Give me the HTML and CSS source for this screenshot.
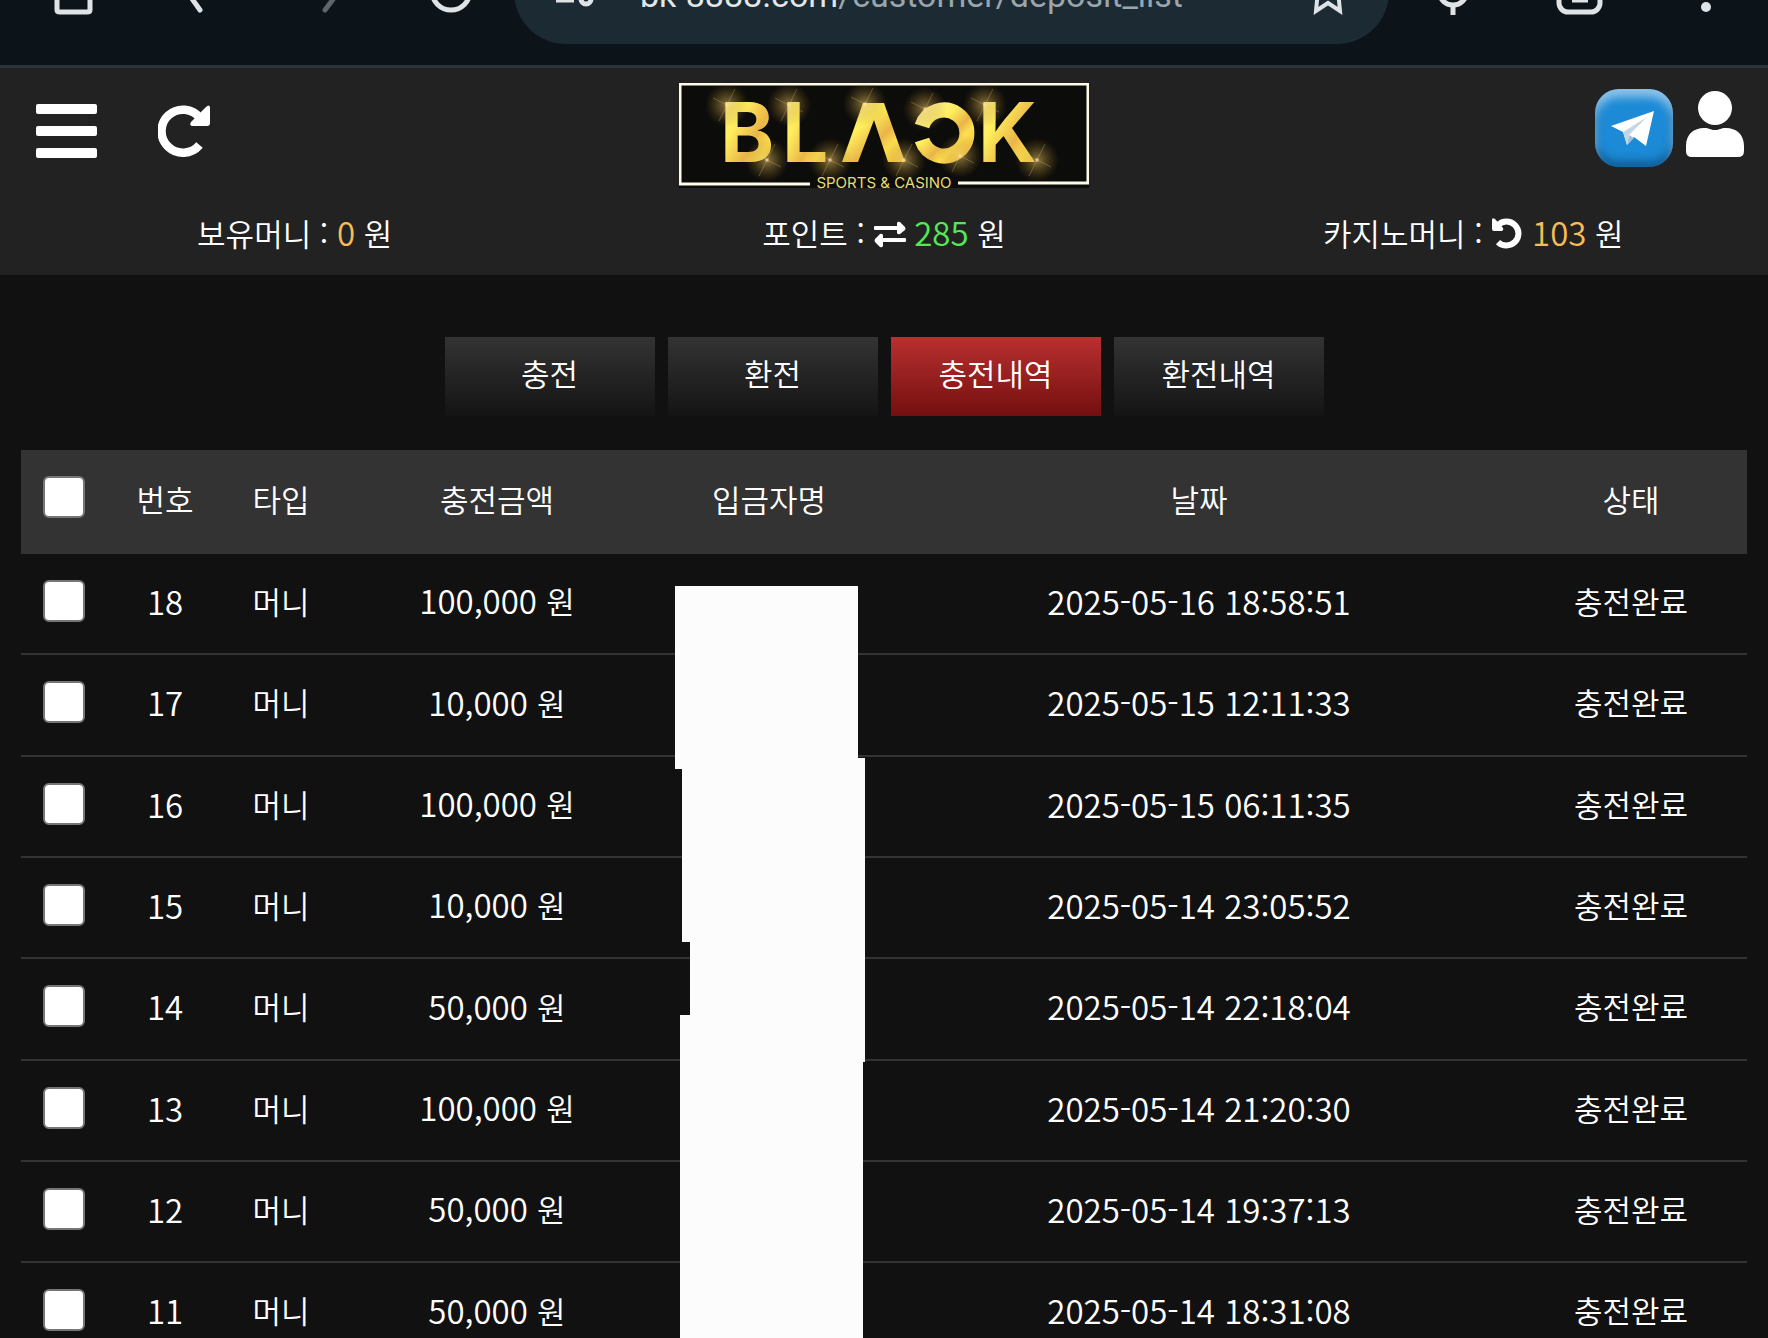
FILE: index.html
```html
<!DOCTYPE html>
<html lang="ko">
<head>
  <meta charset="UTF-8">
  <meta name="viewport" content="width=device-width, initial-scale=1.0">
  <title>BLACK - 충전내역</title>
  <link rel="stylesheet" href="styles.css">
</head>
<body>
  <div class="browser">
    <svg class="nav" viewBox="0 0 500 65" fill="none" stroke="#dfe3e6" stroke-width="5">
      <path d="M57 -20V10Q57 12 60 12H87Q90 12 90 10V-20"/>
      <path d="M183 -14L200 10" stroke-linecap="round"/>
      <path d="M343 -14L325 10" stroke="#5f666b" stroke-linecap="round"/>
      <circle cx="451" cy="-9" r="19"/>
    </svg>
    <div class="url">
      <svg class="tune" viewBox="0 0 44 40" fill="none" stroke="#dfe3e6" stroke-width="5">
        <path d="M2 18H20"/><circle cx="32" cy="17" r="5"/>
      </svg>
      <span class="address"><b>bk-8888.com</b>/customer/deposit_list</span>
      <svg class="star" viewBox="0 0 40 40" fill="none" stroke="#dfe3e6" stroke-width="4">
        <path d="M11 8L9 29L21 21L33 29L31 8"/>
      </svg>
    </div>
    <svg class="tools" viewBox="0 0 379 65" fill="none" stroke="#dfe3e6" stroke-width="5">
      <circle cx="64" cy="-9" r="14"/>
      <path d="M64 4V15"/>
      <rect x="170" y="-27" width="41" height="39" rx="9"/>
      <path d="M183 0H199"/>
      <circle cx="317" cy="7" r="5" fill="#dfe3e6" stroke="none"/>
    </svg>
  </div>

  <header>
    <div class="top">
      <div class="left">
        <button class="icon menu" aria-label="메뉴"><i></i><i></i><i></i></button>
        <button class="icon" aria-label="새로고침">
          <svg width="54" height="54" viewBox="0 0 54 54">
            <path d="M42 15A21.500 21.500 0 1 0 41.500 42" fill="none" stroke="#fff" stroke-width="8.500"/>
            <path d="M52 4V20Q52 23 49 23H34Q31 22 33 19L48 4Q51 1 52 4Z" fill="#fff"/>
          </svg>
        </button>
      </div>
      <a href="#" class="logo" aria-label="BLACK">
        <svg width="410" height="110" viewBox="0 0 410 110">
          <defs>
            <linearGradient id="gold" x1="0" y1="0" x2="1" y2="1">
              <stop offset="0" stop-color="#fff6a0"/>
              <stop offset=".35" stop-color="#ffee5c"/>
              <stop offset=".6" stop-color="#e9b548"/>
              <stop offset=".75" stop-color="#ffe050"/>
              <stop offset="1" stop-color="#f5c040"/>
            </linearGradient>
            <radialGradient id="glow">
              <stop offset="0" stop-color="#fff6c0"/>
              <stop offset=".12" stop-color="#e6c060" stop-opacity=".5"/>
              <stop offset="1" stop-color="#a07820" stop-opacity="0"/>
            </radialGradient>
            <g id="spark">
              <circle r="22" fill="url(#glow)"/>
              <path d="M-8 16L8 -16M-14 -7L14 7" stroke="#e8c878" stroke-opacity=".3"/>
            </g>
          </defs>
          <rect width="410" height="105" fill="#0c0c0a"/>
          <path d="M131 101H1V1H409V100H279" fill="none" stroke="#fffbe8" stroke-width="3"/>
          <g class="word" fill="url(#gold)">
            <text x="41" y="79">B</text>
            <text x="103" y="79">L</text>
            <text x="299" y="79">K</text>
          </g>
          <path d="M163 79L184 20H205L226 79H209L195 37L179 79Z" fill="url(#gold)"/>
          <path d="M243 43A23 23 0 1 1 243 57" fill="none" stroke="url(#gold)" stroke-width="15"/>
          <use href="#spark" x="48" y="22"/><use href="#spark" x="110" y="22"/>
          <use href="#spark" x="186" y="21"/><use href="#spark" x="246" y="26"/>
          <use href="#spark" x="306" y="22"/><use href="#spark" x="88" y="77"/>
          <use href="#spark" x="151" y="77"/><use href="#spark" x="225" y="77"/>
          <use href="#spark" x="281" y="73"/><use href="#spark" x="358" y="77"/>
          <text class="sub" x="205" y="105" text-anchor="middle">SPORTS &amp; CASINO</text>
        </svg>
      </a>
      <div class="right">
        <a href="#" class="telegram" aria-label="텔레그램">
          <svg width="78" height="78" viewBox="0 0 78 78">
            <path d="M16 37L59 22L51 57L39 48L32 56L28 43Z" fill="#fff"/>
            <path d="M28 43L52 28L34 46L32 56Z" fill="#c3d5e8"/>
            <path d="M34 46L39 49L32 56Z" fill="#a5bfd8"/>
          </svg>
        </a>
        <a href="#" aria-label="내 정보">
          <svg width="58" height="66" viewBox="0 0 58 66" fill="#fff">
            <circle cx="29" cy="17" r="17"/>
            <path d="M0 55C0 43 8 37 18 37C24 37 24 39 29 39C34 39 34 37 40 37C50 37 58 43 58 55V60Q58 66 52 66H6Q0 66 0 60Z"/>
          </svg>
        </a>
      </div>
    </div>
    <div class="money">
      <div>보유머니 : <span class="num orange">0</span> 원</div>
      <div>포인트 :
        <svg width="32" height="28" viewBox="0 0 32 28" fill="#fff">
          <path d="M1 5H23V2Q24 0 26 1L31 6Q32 8 31 9L26 13Q24 14 23 12V9H1Q0 9 0 8V6Q0 5 1 5Z"/>
          <path d="M31 17H9V14Q8 12 6 13L1 18Q0 20 1 21L6 26Q8 27 9 25V21H31Q32 21 32 20V18Q32 17 31 17Z"/>
        </svg>
        <span class="num green">285</span> 원</div>
      <div>카지노머니 :
        <svg width="32" height="32" viewBox="0 0 32 32">
          <path d="M7 8A12 12 0 1 1 7 25" fill="none" stroke="#fff" stroke-width="6"/>
          <path d="M1 3V12Q1 14 3 14H11Q13 13 12 11L4 2Q1 0 1 3Z" fill="#fff"/>
        </svg>
        <span class="num orange">103</span> 원</div>
    </div>
  </header>

  <nav class="tabs">
    <button>충전</button>
    <button>환전</button>
    <button class="active">충전내역</button>
    <button>환전내역</button>
  </nav>

  <div class="list">
    <table>
      <colgroup>
        <col class="c-check"><col class="c-no"><col class="c-type"><col class="c-amount"><col class="c-name"><col class="c-date"><col class="c-state">
      </colgroup>
      <thead>
        <tr>
          <th><input type="checkbox" aria-label="전체 선택"></th>
          <th>번호</th>
          <th>타입</th>
          <th>충전금액</th>
          <th>입금자명</th>
          <th>날짜</th>
          <th>상태</th>
        </tr>
      </thead>
      <tbody>
        <tr>
          <td><input type="checkbox" aria-label="18"></td>
          <td class="num">18</td>
          <td>머니</td>
          <td><span class="num">100,000 </span>원</td>
          <td></td>
          <td class="num">2025-05-16 18:58:51</td>
          <td>충전완료</td>
        </tr>
        <tr>
          <td><input type="checkbox" aria-label="17"></td>
          <td class="num">17</td>
          <td>머니</td>
          <td><span class="num">10,000 </span>원</td>
          <td></td>
          <td class="num">2025-05-15 12:11:33</td>
          <td>충전완료</td>
        </tr>
        <tr>
          <td><input type="checkbox" aria-label="16"></td>
          <td class="num">16</td>
          <td>머니</td>
          <td><span class="num">100,000 </span>원</td>
          <td></td>
          <td class="num">2025-05-15 06:11:35</td>
          <td>충전완료</td>
        </tr>
        <tr>
          <td><input type="checkbox" aria-label="15"></td>
          <td class="num">15</td>
          <td>머니</td>
          <td><span class="num">10,000 </span>원</td>
          <td></td>
          <td class="num">2025-05-14 23:05:52</td>
          <td>충전완료</td>
        </tr>
        <tr>
          <td><input type="checkbox" aria-label="14"></td>
          <td class="num">14</td>
          <td>머니</td>
          <td><span class="num">50,000 </span>원</td>
          <td></td>
          <td class="num">2025-05-14 22:18:04</td>
          <td>충전완료</td>
        </tr>
        <tr>
          <td><input type="checkbox" aria-label="13"></td>
          <td class="num">13</td>
          <td>머니</td>
          <td><span class="num">100,000 </span>원</td>
          <td></td>
          <td class="num">2025-05-14 21:20:30</td>
          <td>충전완료</td>
        </tr>
        <tr>
          <td><input type="checkbox" aria-label="12"></td>
          <td class="num">12</td>
          <td>머니</td>
          <td><span class="num">50,000 </span>원</td>
          <td></td>
          <td class="num">2025-05-14 19:37:13</td>
          <td>충전완료</td>
        </tr>
        <tr>
          <td><input type="checkbox" aria-label="11"></td>
          <td class="num">11</td>
          <td>머니</td>
          <td><span class="num">50,000 </span>원</td>
          <td></td>
          <td class="num">2025-05-14 18:31:08</td>
          <td>충전완료</td>
        </tr>
      </tbody>
    </table>
    <!-- 입금자명 가림 -->
    <svg class="mask" width="190" height="780" viewBox="0 0 190 780">
      <path d="M0 0H183V172H190V476H188V780H5V429H15V356H7V183H0Z" fill="#fcfcfc"/>
    </svg>
  </div>
</body>
</html>
```

FILE: styles.css
```css
* { box-sizing: border-box; }
body { margin: 0; height: 100vh; overflow: hidden; background: #111; color: #fff; font-family: "Noto Sans CJK KR", sans-serif; font-size: 31px; font-weight: 350; line-height: 40px; }
button { font: inherit; color: inherit; border: 0; padding: 0; cursor: pointer; }
.num { font-size: 33px; }
.orange { color: #f7bc58; }
.green { color: #55e855; }

/* browser bar */
.browser { display: flex; height: 68px; background: #0c1419; border-bottom: 3px solid #2c343b; overflow: hidden; }
.browser .nav { width: 500px; height: 65px; }
.browser .tools { width: 379px; height: 65px; }
.url { flex: 1; height: 104px; margin: -60px 0 0 14px; padding: 42px 42px 0 40px; display: flex; background: #1b2a33; border-radius: 52px; }
.url .tune { width: 44px; height: 40px; }
.address { flex: 1; margin: -7px 0 0 42px; font-family: Roboto, sans-serif; font-size: 34px; font-weight: 400; line-height: 40px; color: #9aa5ac; white-space: nowrap; }
.address b { font-weight: 400; color: #e3e7ea; }
.url .star { width: 40px; height: 40px; }

/* header */
header { background: #222; height: 207px; }
.top { display: flex; justify-content: space-between; padding: 15px 24px 0; height: 138px; }
.left, .right { flex: 1; display: flex; }
.left { gap: 61px; align-items: flex-start; }
.right { justify-content: flex-end; gap: 13px; }
.icon { background: none; display: flex; margin-top: 20px; }
.menu { width: 61px; flex-direction: column; gap: 12px; margin-left: 12px; }
.menu i { width: 61px; height: 10px; border-radius: 2px; background: #fff; }
.menu { padding-top: 1px; }
.logo, .logo svg { display: block; }
.word { font: bold 82px Inter, sans-serif; }
.sub { font: 15px Inter, sans-serif; fill: #e6dc78; }
.right a { margin-top: 6px; }
.right a + a { margin-top: 8px; }
.telegram { width: 78px; height: 78px; border-radius: 24px; background: #1c8ad6; box-shadow: inset 0 8px 10px rgba(255,255,255,.5), inset 0 -6px 8px rgba(0,50,90,.5); }
.telegram svg { display: block; }
.money { display: grid; grid-template-columns: 1fr 1fr 1fr; text-align: center; padding-top: 6px; }
.money svg { vertical-align: -3px; }

/* tabs */
.tabs { display: flex; justify-content: center; gap: 13px; margin-top: 62px; }
.tabs button { width: 210px; height: 79px; padding-bottom: 8px; background: linear-gradient(#333, #141414); }
.tabs .active { background: linear-gradient(#b93030, #740f0f); }

/* list */
.list { position: relative; margin: 34px 21px 0; }
table { width: 100%; border-spacing: 0; table-layout: fixed; }
th, td { padding: 0 0 6px; text-align: center; font-weight: 350; }
th { height: 104px; background: #333; }
td { height: 101px; border-bottom: 2px solid #333; }
tr:nth-child(3n+2) td { height: 102px; }
th:first-child { padding-bottom: 10px; }
.c-check { width: 86px; }
.c-no { width: 116px; }
.c-type { width: 116px; }
.c-amount { width: 316px; }
.c-name { width: 228px; }
.c-date { width: 632px; }
.c-state { width: 232px; }
input[type="checkbox"] { appearance: none; display: block; width: 42px; height: 42px; margin: 0 auto; background: #fff; border: 2px solid #767676; border-radius: 6px; }
.mask { position: absolute; top: 136px; left: 37.9%; }
```
